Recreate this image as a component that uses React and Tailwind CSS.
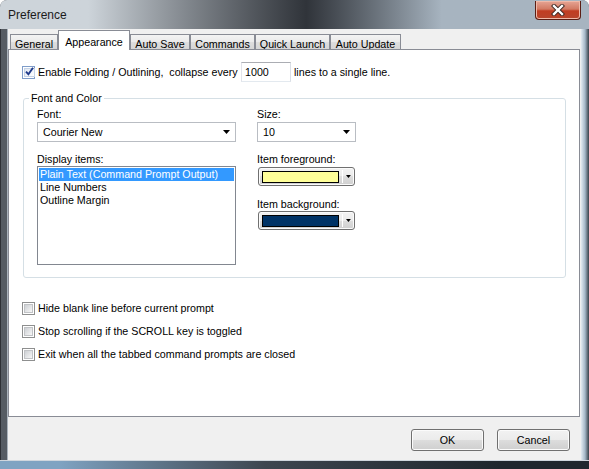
import React from "react";

const tabs = [
  { label: "General", w: "w-[48px]" },
  { label: "Appearance", w: "w-[72px]", active: true },
  { label: "Auto Save", w: "w-[60px]" },
  { label: "Commands", w: "w-[65px]" },
  { label: "Quick Launch", w: "w-[75px]" },
  { label: "Auto Update", w: "w-[71px]" },
];

// Win7 style checkbox
function Check({ checked }) {
  return (
    <span
      className={
        checked
          ? "w-[13px] h-[13px] shrink-0 flex border border-[#7f9dc9] bg-white p-[1px]"
          : "w-[13px] h-[13px] shrink-0 flex border border-[#8e8f8f] bg-white p-[1px]"
      }
    >
      <span
        className={
          checked
            ? "flex-1 flex items-center justify-center border border-[#c6d3e6] bg-linear-to-br from-[#dfe7f2] to-white"
            : "flex-1 border border-[#c1c3c6] bg-linear-to-br from-[#cdd0d4] to-[#f7f7f7]"
        }
      >
        {checked && (
          <svg width="9" height="9" viewBox="0 0 9 9" className="-mt-[1px]">
            <path d="M1 4.6 L3.4 7.2 L8 0.8" fill="none" stroke="#1f3a8a" strokeWidth="1.9" />
          </svg>
        )}
      </span>
    </span>
  );
}

function Arrow() {
  return (
    <svg width="7" height="4" viewBox="0 0 7 4" className="shrink-0">
      <path d="M0 0 H7 L3.5 4 Z" fill="#000" />
    </svg>
  );
}

function Select({ value, w }) {
  return (
    <div className={`${w} h-[20px] flex items-center justify-between pl-[5px] pr-[5px] border border-[#b9bdc3] bg-white`}>
      <span>{value}</span>
      <Arrow />
    </div>
  );
}

function ColorPick({ color }) {
  return (
    <div className="ml-[1px] w-[97px] h-[19px] flex items-center rounded-[3px] border border-[#707070] bg-[image:linear-gradient(#f2f2f2_0%,#ebebeb_50%,#dddddd_50%,#cfcfcf_100%)] shadow-[inset_0_0_0_1px_#fbfbfb] pl-[3px] pr-[3px]">
      <div className={`w-[79px] h-[12px] border border-black ${color}`} />
      <div className="ml-[3px] h-[13px] w-px bg-[#9a9a9a] border-r border-white" />
      <svg width="5" height="3" viewBox="0 0 5 3" className="ml-[3px]">
        <path d="M0 0 H5 L2.5 3 Z" fill="#000" />
      </svg>
    </div>
  );
}

function Button({ children }) {
  return (
    <button className="w-[73px] h-[22px] rounded-[3px] border border-[#707070] bg-[image:linear-gradient(#f2f2f2_0%,#ebebeb_50%,#dddddd_50%,#cfcfcf_100%)] shadow-[inset_0_0_0_1px_#fbfbfb] text-black leading-none">
      {children}
    </button>
  );
}

export default function App() {
  return (
    <div className="w-[589px] h-[469px] flex flex-col overflow-hidden rounded-t-[7px] bg-[#4b5158] font-[family-name:'Liberation_Sans',Arial,sans-serif] text-[10.7px] text-black">
      {/* title bar */}
      <div className="h-[29px] shrink-0 flex justify-between items-start bg-linear-to-r from-[#cdd4da] from-15% via-[#30343a] via-52% to-[#a7b4c0] to-75%">
        <span className="pl-[8px] pt-[7px] text-[12px] leading-[16px] text-[#1b1b1b]">Preference</span>
        <div className="mr-[8px] mt-[1px] w-[46px] h-[19px] flex items-center justify-center rounded-b-[4px] border border-[#5b1e14] border-t-0 bg-[image:linear-gradient(#e6a595_0%,#d27a63_45%,#c13d22_55%,#b8452c_100%)] shadow-[inset_0_0_0_1px_#f0b9a8]">
          <svg width="14" height="12" viewBox="0 0 14 12">
            <path d="M3 2 L11 10 M11 2 L3 10" stroke="#3b2520" strokeWidth="4.2" strokeLinecap="square" />
            <path d="M3 2 L11 10 M11 2 L3 10" stroke="#ffffff" strokeWidth="2.4" strokeLinecap="square" />
          </svg>
        </div>
      </div>

      <div className="flex flex-1">
        <div className="w-[8px] bg-[#565c63] border-l border-[#2d3035] border-r border-r-[#aab3bc]" />

        {/* client area */}
        <div className="w-[573px] flex flex-col bg-[#f0f0f0]">
          {/* tab strip */}
          <div className="pt-[1px] pl-[2px] h-[20px] flex items-end">
            {tabs.map((t) =>
              t.active ? (
                <div
                  key={t.label}
                  className={`${t.w} h-[20px] -mb-px relative z-10 flex justify-center pt-[3px] border border-b-0 border-[#898c95] bg-white`}
                >
                  {t.label}
                </div>
              ) : (
                <div
                  key={t.label}
                  className={`${t.w} h-[15px] flex justify-center pt-[1px] border border-b-0 border-[#898c95] bg-[image:linear-gradient(#f4f4f4_0%,#eaeaea_50%,#dedede_50%,#d6d6d6_100%)]`}
                >
                  {t.label}
                </div>
              )
            )}
          </div>

          {/* tab panel */}
          <div className="w-[572px] h-[368px] border border-[#898c95] bg-white flex flex-col pl-[13px] leading-[13px]">
            <div className="mt-[12px] h-[20px] flex items-center">
              <Check checked />
              <span className="ml-[3px] w-[203px] whitespace-pre">Enable Folding / Outlining,  collapse every</span>
              <div className="w-[50px] h-[20px] flex items-center pl-[3px] border border-[#abadb3] border-l-[#e2e3ea] border-b-[#e3e9ef] border-r-[#dbdfe6]">
                1000
              </div>
              <span className="ml-[3px]">lines to a single line.</span>
            </div>

            <fieldset className="mt-[10px] ml-[1px] w-[543px] border border-[#d5dfe5] rounded-[3px] pt-[3px] pb-[12px] pl-[13px] flex">
              <legend className="-ml-[8px] px-[2px] leading-[13px]">Font and Color</legend>
              <div className="flex gap-[21px]">
                <div className="flex flex-col">
                  <span className="h-[13px] mb-[1px]">Font:</span>
                  <Select value="Courier New" w="w-[199px]" />
                  <span className="h-[13px] mt-[11px]">Display items:</span>
                  <div className="w-[199px] h-[99px] border border-[#828790] pt-[1px] px-[1px] flex flex-col">
                    <span className="h-[13px] pl-[1px] bg-[#3399ff] text-white">Plain Text (Command Prompt Output)</span>
                    <span className="h-[13px] pl-[1px]">Line Numbers</span>
                    <span className="h-[13px] pl-[1px]">Outline Margin</span>
                  </div>
                </div>
                <div className="flex flex-col">
                  <span className="h-[13px] mb-[1px]">Size:</span>
                  <Select value="10" w="w-[99px]" />
                  <span className="h-[13px] mt-[11px] mb-[1px]">Item foreground:</span>
                  <ColorPick color="bg-[#ffff99]" />
                  <span className="h-[13px] mt-[12px]">Item background:</span>
                  <ColorPick color="bg-[#003366]" />
                </div>
              </div>
            </fieldset>

            <div className="mt-[24px] h-[13px] flex items-center">
              <Check />
              <span className="ml-[3px]">Hide blank line before current prompt</span>
            </div>
            <div className="mt-[10px] h-[13px] flex items-center">
              <Check />
              <span className="ml-[3px]">Stop scrolling if the SCROLL key is toggled</span>
            </div>
            <div className="mt-[10px] h-[13px] flex items-center">
              <Check />
              <span className="ml-[3px]">Exit when all the tabbed command prompts are closed</span>
            </div>
          </div>

          {/* buttons */}
          <div className="pt-[12px] pr-[11px] flex justify-end gap-[13px]">
            <Button>OK</Button>
            <Button>Cancel</Button>
          </div>
        </div>

        <div className="w-[8px] bg-linear-to-r from-[#e4ebf1] via-[#a6b8c8] to-[#3a424a]" />
      </div>

      {/* bottom frame */}
      <div className="h-[9px] shrink-0 border-t border-[#cfd6dd] bg-linear-to-r from-[#7fa3c2] from-10% via-[#3d4650] via-45% to-[#1f272e] to-85%" />
    </div>
  );
}
